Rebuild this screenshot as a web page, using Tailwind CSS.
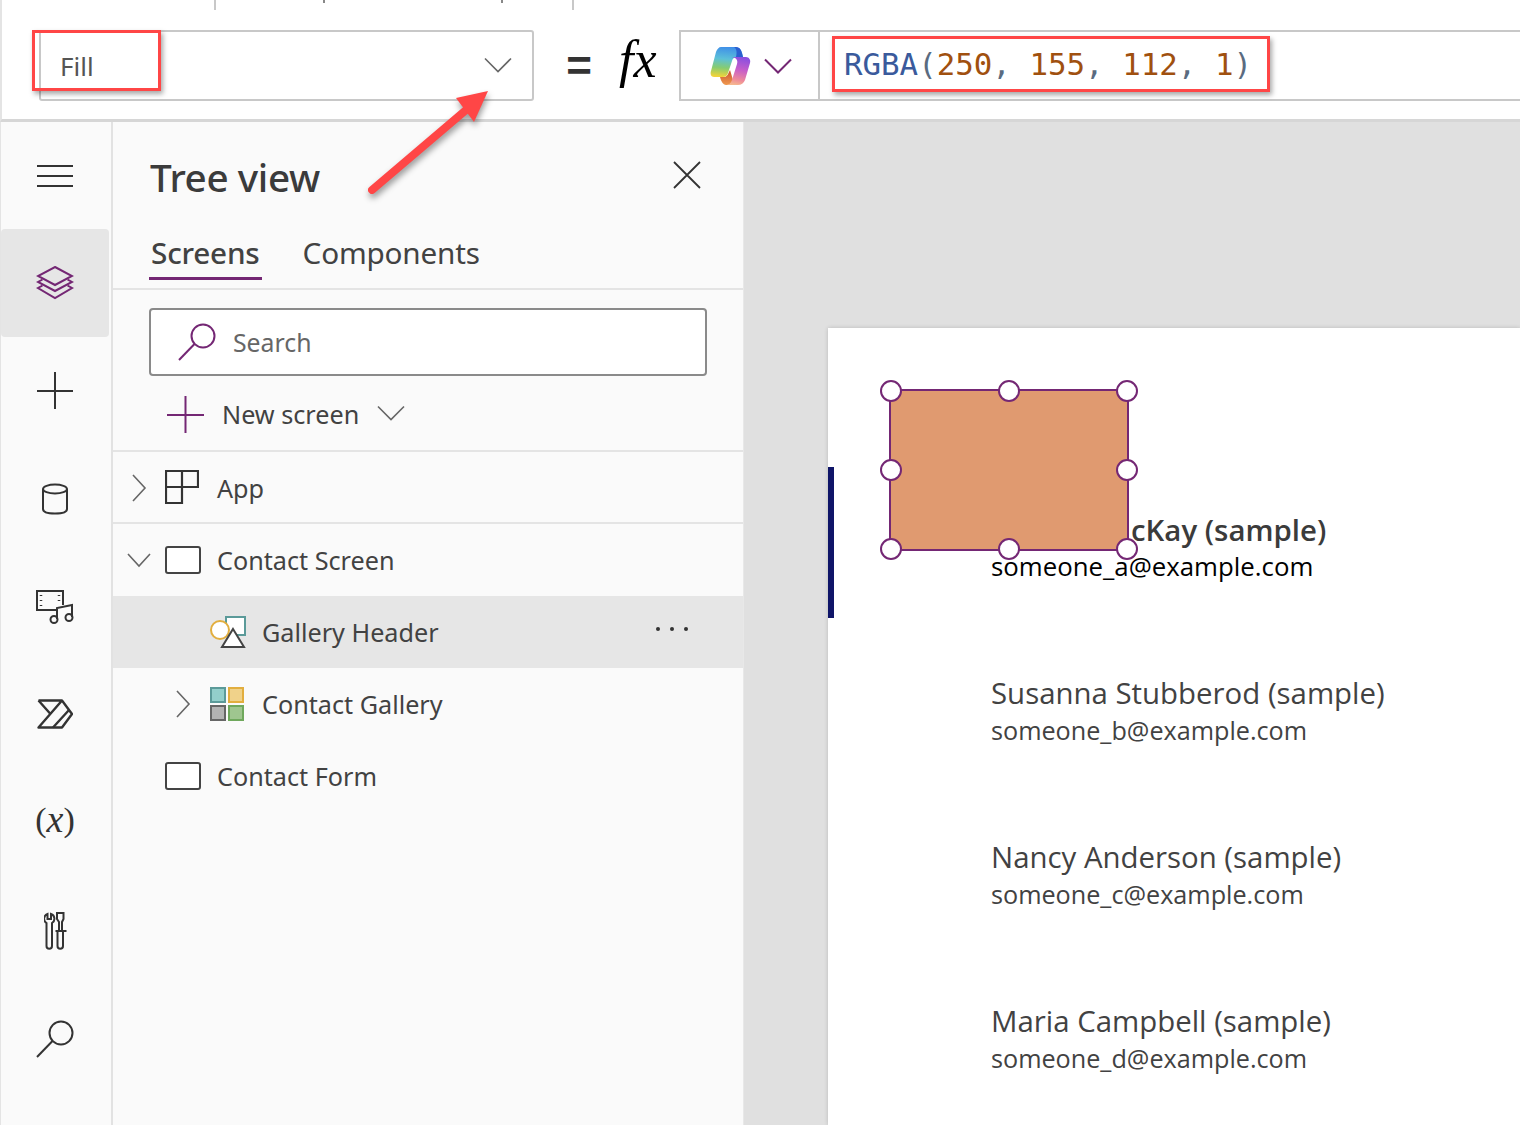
<!DOCTYPE html>
<html lang="en">
<head>
    <meta charset="UTF-8">
    <title>Tree view</title>
    <script src="https://cdn.jsdelivr.net/npm/@tailwindcss/browser@4"></script>
</head>
<body class="bg-white">
<div class="relative w-[1520px] h-[1125px] overflow-hidden font-['Open_Sans',sans-serif] text-[#424242]">

    <!-- formula bar -->
    <div class="relative h-[122px] bg-white border-b-[3px] border-[#d6d6d6] border-l-2 border-l-[#e4e4e4]">
        <div class="absolute left-[212px] top-0 w-[2px] h-[10px] bg-[#c8c8c8]"></div>
        <div class="absolute left-[321px] top-0 w-[2px] h-[3px] bg-[#888]"></div>
        <div class="absolute left-[499px] top-0 w-[2px] h-[3px] bg-[#888]"></div>
        <div class="absolute left-[570px] top-0 w-[2px] h-[10px] bg-[#c8c8c8]"></div>

        <div class="flex items-center h-full pt-[12px] pl-[37px]">
            <div class="flex items-center justify-between w-[495px] h-[71px] border-2 border-[#c8c8c8] rounded-[3px] pl-[19px] pr-[20px]">
                <span class="text-[26px] font-['Noto_Sans',sans-serif] mt-[2px] text-[#555]">Fill</span>
                <svg width="28" height="16" viewBox="0 0 28 16" class="-mt-[1px]"><path d="M1 1.500 14 14.500 27 1.500" fill="none" stroke="#666" stroke-width="1.600"/></svg>
            </div>
            <span class="ml-[30px] w-[30px] text-center text-[44px] leading-none font-bold font-['Liberation_Sans',sans-serif] text-[#333] mt-[1px]">=</span>
            <span class="ml-[25px] w-[40px] text-[52px] leading-none italic font-['Liberation_Serif',serif] text-black -mt-[12px]">fx</span>
            <div class="ml-[20px] flex-1 flex h-[71px] border-y-2 border-l-2 border-[#c8c8c8]">
                <div class="flex items-center w-[139px] border-r-2 border-[#c8c8c8] pl-[27px]">
                    <svg width="44" height="44" viewBox="0 0 44 44">
                        <defs>
                            <linearGradient id="cpA" x1="0.5" y1="0" x2="0.4" y2="1">
                                <stop offset="0" stop-color="#3f8fe8"/><stop offset="0.4" stop-color="#5cc0d8"/><stop offset="0.7" stop-color="#86cc70"/><stop offset="1" stop-color="#f2d43a"/>
                            </linearGradient>
                            <linearGradient id="cpB" x1="0.6" y1="0" x2="0.4" y2="1">
                                <stop offset="0" stop-color="#8a4fe0"/><stop offset="0.45" stop-color="#c85fc8"/><stop offset="0.8" stop-color="#ee8a9a"/><stop offset="1" stop-color="#f6b88e"/>
                            </linearGradient>
                            <linearGradient id="cpC" x1="0.5" y1="0" x2="0.5" y2="1">
                                <stop offset="0" stop-color="#c8502a"/><stop offset="1" stop-color="#f09a50"/>
                            </linearGradient>
                        </defs>
                        <path d="M12 33H16C18 33 20 31 20.500 29L22 26 25 36C24 39 22 41 19 41H18C15 41 13 37 12 33z" fill="url(#cpC)"/>
                        <path d="M13 3H28C31 3 33 5 34 9L35 13H29C26 13 24.500 15 24 17L20 29C19.500 31 18 33 15 33H6C3 33 2 30 3 27L8 8C9 5 11 3 13 3z" fill="url(#cpA)"/>
                        <path d="M26 3H28C31 3 33 5 34 9L35 13H28C29 9 29 5 26 3z" fill="#2b5fd0"/>
                        <path d="M24 13H38C41 13 43 16 42 19L37 36C36 39 33 41 30 41H17C21 41 23 39 24 36L29 20C30 17 29 14 24 13z" fill="url(#cpB)"/>
                    </svg>
                    <svg width="28" height="16" viewBox="0 0 28 16" class="ml-[12px]"><path d="M1 1.500 14 14.500 27 1.500" fill="none" stroke="#742774" stroke-width="2"/></svg>
                </div>
                <div class="pl-[24px] pt-[13px] text-[30.800px] leading-[38px] font-['DejaVu_Sans_Mono',monospace] whitespace-pre text-[#5a6b80]"><span class="text-[#3a5a9c]">RGBA</span>(<span class="text-[#a0500f]">250</span>, <span class="text-[#a0500f]">155</span>, <span class="text-[#a0500f]">112</span>, <span class="text-[#a0500f]">1</span>)</div>
            </div>
        </div>
    </div>

    <div class="flex h-[1003px]">
        <!-- left rail -->
        <nav class="w-[113px] shrink-0 bg-[#fafafa] border-l border-l-[#e4e4e4] border-r-2 border-r-[#e2e2e2] flex flex-col text-[#333]">
            <div class="h-[107px] w-[108px] flex items-center justify-center">
                <svg width="38" height="24" viewBox="0 0 38 24"><path d="M1 2h36M1 12h36M1 22h36" stroke="#333" stroke-width="2"/></svg>
            </div>
            <div class="h-[108px] w-[108px] flex items-center justify-center bg-[#e6e6e6] rounded-[4px]">
                <svg width="38" height="34" viewBox="0 0 38 34" fill="none" stroke="#742774" stroke-width="2"><path d="M19 1 36 10 19 19 2 10z"/><path d="M6.500 13.500 2 16 19 25 36 16 31.500 13.500"/><path d="M6.500 19.500 2 22 19 32 36 22 31.500 19.500"/></svg>
            </div>
            <div class="h-[108px] w-[108px] flex items-center justify-center">
                <svg width="36" height="38" viewBox="0 0 36 38"><path d="M0 19h36M18 0v37" stroke="#333" stroke-width="2"/></svg>
            </div>
            <div class="h-[108px] w-[108px] flex items-center justify-center">
                <svg width="28" height="32" viewBox="0 0 28 32" fill="none" stroke="#333" stroke-width="2"><ellipse cx="14" cy="6" rx="12" ry="4.500"/><path d="M2 6v20c0 3 5 4.500 12 4.500s12-1.500 12-4.500V6"/></svg>
            </div>
            <div class="h-[108px] w-[108px] flex items-center justify-center">
                <svg width="38" height="34" viewBox="0 0 38 34" fill="none" stroke="#333" stroke-width="2"><path d="M21 20H1V1h26v14"/><path d="M5 5v1M5 10v1M5 15v1M23 5v1M23 10v1" stroke-width="2.500"/><path d="M21 29V18l15-3v12"/><circle cx="18" cy="29.500" r="3.500"/><circle cx="33" cy="27.500" r="3.500"/></svg>
            </div>
            <div class="h-[108px] w-[108px] flex items-center justify-center pb-[2px]">
                <svg width="36" height="30" viewBox="0 0 36 30" fill="none" stroke="#333" stroke-width="2.400" stroke-linejoin="round"><path d="M1.500 1.500H25L35 15 25 28.500H1.500L25 1.500"/><path d="M1.500 1.500 13.500 15M32 11 16 28.500" /></svg>
            </div>
            <div class="h-[108px] w-[108px] flex items-center justify-center pb-[8px] text-[34px] font-['Liberation_Serif',serif] text-[#333]">(<span class="italic text-[38px]">x</span>)</div>
            <div class="h-[108px] w-[108px] flex items-center justify-center pl-[1px]">
                <svg width="24" height="38" viewBox="0 0 24 38" fill="none" stroke="#333" stroke-width="2"><path d="M3.500 2a5 5 0 0 0-1 9v23a2.750 2.750 0 0 0 5.500 0V11a5 5 0 0 0-1-9v5h-3.500z"/><path d="M13 1h6.500v6L18 10v9h-3v-9L13 7zM11.500 19h11M13.500 19v15a2.750 2.750 0 0 0 5.500 0V19"/></svg>
            </div>
            <div class="h-[108px] w-[108px] flex items-center justify-center">
                <svg width="38" height="38" viewBox="0 0 38 38" fill="none" stroke="#333" stroke-width="2"><circle cx="25" cy="13" r="11.500"/><path d="M16.500 21 1 37"/></svg>
            </div>
        </nav>

        <!-- tree panel -->
        <aside class="w-[631px] shrink-0 bg-[#fafafa] border-r border-[#e8e8e8] flex flex-col font-['Noto_Sans',sans-serif]">
            <div class="flex items-start justify-between pl-[37px] pr-[41px] h-[93px]">
                <h1 class="text-[38.700px] leading-[50px] font-medium tracking-[-0.4px] mt-[30px] text-[#3b3b3b]">Tree view</h1>
                <svg width="30" height="30" viewBox="0 0 30 30" class="mt-[38px]"><path d="M2 2 28 28M28 2 2 28" stroke="#333" stroke-width="1.800"/></svg>
            </div>
            <div class="flex items-start pl-[36px] h-[75px] border-b-2 border-[#e4e4e4] text-[29.700px] leading-[40px] tracking-[-0.2px]">
                <div class="h-[65px] border-b-[3px] border-[#742774] px-[2px] pt-[18px] font-medium text-[#424242] box-border">Screens</div>
                <div class="ml-[41px] pt-[18px]">Components</div>
            </div>
            <div class="pl-[36px] pt-[18px] pr-[36px]">
                <div class="flex items-center h-[68px] bg-white border-2 border-[#8a8a8a] rounded-[4px] pl-[27px]">
                    <svg width="38" height="38" viewBox="0 0 38 38" fill="none" stroke="#742774" stroke-width="2"><circle cx="25" cy="13" r="11.500"/><path d="M16.500 21 1 37"/></svg>
                    <span class="ml-[17px] mt-[2px] text-[24.800px] text-[#666]">Search</span>
                </div>
            </div>
            <div class="flex items-center h-[76px] pl-[54px] pt-[3px] border-b-2 border-[#e4e4e4] text-[25.200px]">
                <svg width="38" height="38" viewBox="0 0 38 38"><path d="M0 19h37M18.500 0v37" stroke="#742774" stroke-width="2"/></svg>
                <span class="ml-[17px] mt-[1px]">New screen</span>
                <svg width="28" height="16" viewBox="0 0 28 16" class="ml-[18px] -mt-[4px]"><path d="M1 1.500 14 14.500 27 1.500" fill="none" stroke="#666" stroke-width="1.600"/></svg>
            </div>
            <div class="flex items-center h-[72px] pl-[18px] border-b-2 border-[#e4e4e4] text-[25.200px]">
                <svg width="16" height="28" viewBox="0 0 16 28" class="mt-[1px]"><path d="M2 1 14 14 2 27" fill="none" stroke="#666" stroke-width="1.600"/></svg>
                <svg width="34" height="34" viewBox="0 0 34 34" fill="none" stroke="#333" stroke-width="2.200" class="ml-[18px]"><path d="M1 1h32v16H1zM17 1v32H1V17"/></svg>
                <span class="ml-[18px] mt-[4px]">App</span>
            </div>
            <div class="flex items-center h-[72px] pl-[14px] text-[25.200px]">
                <svg width="24" height="16" viewBox="0 0 24 16"><path d="M1 2 12 14 23 2" fill="none" stroke="#666" stroke-width="1.600"/></svg>
                <svg width="36" height="28" viewBox="0 0 36 28" class="ml-[14px]"><rect x="1" y="1" width="34" height="26" rx="2" fill="#fff" stroke="#444" stroke-width="2"/></svg>
                <span class="ml-[16px] mt-[2px]">Contact Screen</span>
            </div>
            <div class="flex items-center h-[72px] pl-[96px] bg-[#e6e6e6] text-[25.200px]">
                <svg width="38" height="34" viewBox="0 0 38 34" fill="none" stroke-width="2"><rect x="17" y="2" width="19" height="18" fill="#fff" stroke="#5b9a99"/><circle cx="11" cy="15" r="9" fill="#fff" stroke="#e2ae3e"/><path d="M24 14 35 32H13z" fill="#fff" stroke="#444"/></svg>
                <span class="ml-[15px] mt-[2px]">Gallery Header</span>
                <div class="ml-[217px] -mt-[6px] flex gap-[10px]"><i class="block w-[4px] h-[4px] rounded-full bg-[#333]"></i><i class="block w-[4px] h-[4px] rounded-full bg-[#333]"></i><i class="block w-[4px] h-[4px] rounded-full bg-[#333]"></i></div>
            </div>
            <div class="flex items-center h-[72px] pl-[62px] text-[25.200px]">
                <svg width="16" height="28" viewBox="0 0 16 28"><path d="M2 1 14 14 2 27" fill="none" stroke="#666" stroke-width="1.600"/></svg>
                <svg width="36" height="36" viewBox="0 0 36 36" stroke-width="2" class="ml-[18px]">
                    <rect x="2" y="2" width="14" height="14" fill="#93cfcb" stroke="#5b9a99"/>
                    <rect x="20" y="2" width="14" height="14" fill="#f0d28a" stroke="#e2ae3e"/>
                    <rect x="2" y="20" width="14" height="14" fill="#b3b3b3" stroke="#666"/>
                    <rect x="20" y="20" width="14" height="14" fill="#9fc68f" stroke="#6fa85c"/>
                </svg>
                <span class="ml-[17px] mt-[2px]">Contact Gallery</span>
            </div>
            <div class="flex items-center h-[72px] pl-[52px] text-[25.200px]">
                <svg width="36" height="28" viewBox="0 0 36 28"><rect x="1" y="1" width="34" height="26" rx="2" fill="#fff" stroke="#444" stroke-width="2"/></svg>
                <span class="ml-[16px] mt-[2px]">Contact Form</span>
            </div>
        </aside>

        <!-- canvas -->
        <main class="flex-1 bg-[#e0e0e0] pl-[84px] pt-[206px]">
            <div class="bg-white h-full shadow-[0_0_4px_rgba(0,0,0,0.18)] pt-[139px]">
                <div class="h-[164px] relative">
                    <div class="absolute left-0 top-0 w-[6px] h-[151px] bg-[#0f1568]"></div>
                    <div class="pl-[303px] pt-[43px] text-[29.400px] leading-[40px] font-semibold text-[#3b3b3b]">cKay (sample)</div>
                    <div class="pl-[163px] text-[25.800px] leading-[34px] font-medium text-black -mt-[1px]">someone_a@example.com</div>
                </div>
                <div class="h-[164px] pl-[163px] pt-[42px]">
                    <div class="text-[29.400px] leading-[40px]">Susanna Stubberod (sample)</div>
                    <div class="text-[25.200px] leading-[34px]">someone_b@example.com</div>
                </div>
                <div class="h-[164px] pl-[163px] pt-[42px]">
                    <div class="text-[29.400px] leading-[40px]">Nancy Anderson (sample)</div>
                    <div class="text-[25.200px] leading-[34px]">someone_c@example.com</div>
                </div>
                <div class="h-[164px] pl-[163px] pt-[42px]">
                    <div class="text-[29.400px] leading-[40px]">Maria Campbell (sample)</div>
                    <div class="text-[25.200px] leading-[34px]">someone_d@example.com</div>
                </div>
            </div>
        </main>
    </div>

    <!-- selected shape on the canvas -->
    <div class="absolute left-[889px] top-[389px] w-[240px] h-[162px] bg-[#e09a70] border-2 border-[#742774]"></div>
    <i class="absolute left-[880px] top-[380px] w-[22px] h-[22px] rounded-full bg-white border-2 border-[#742774]"></i>
    <i class="absolute left-[998px] top-[380px] w-[22px] h-[22px] rounded-full bg-white border-2 border-[#742774]"></i>
    <i class="absolute left-[1116px] top-[380px] w-[22px] h-[22px] rounded-full bg-white border-2 border-[#742774]"></i>
    <i class="absolute left-[880px] top-[459px] w-[22px] h-[22px] rounded-full bg-white border-2 border-[#742774]"></i>
    <i class="absolute left-[1116px] top-[459px] w-[22px] h-[22px] rounded-full bg-white border-2 border-[#742774]"></i>
    <i class="absolute left-[880px] top-[538px] w-[22px] h-[22px] rounded-full bg-white border-2 border-[#742774]"></i>
    <i class="absolute left-[998px] top-[538px] w-[22px] h-[22px] rounded-full bg-white border-2 border-[#742774]"></i>
    <i class="absolute left-[1116px] top-[538px] w-[22px] h-[22px] rounded-full bg-white border-2 border-[#742774]"></i>

    <!-- red annotations -->
    <div class="absolute left-[32px] top-[30px] w-[129px] h-[61px] border-[3px] border-[#ff4646] shadow-[2px_3px_5px_rgba(0,0,0,0.35)]"></div>
    <div class="absolute left-[832px] top-[36px] w-[438px] h-[56px] border-[3px] border-[#ff4646] shadow-[2px_3px_5px_rgba(0,0,0,0.35)]"></div>
    <svg class="absolute left-[360px] top-[85px] drop-shadow-[1px_4px_3px_rgba(0,0,0,0.4)]" width="140" height="120" viewBox="0 0 140 120">
        <path d="M12 105 106 25" fill="none" stroke="#ff4646" stroke-width="8" stroke-linecap="round"/>
        <path d="M128 6 96 13 114 37z" fill="#ff4646"/>
    </svg>
</div>
</body>
</html>
